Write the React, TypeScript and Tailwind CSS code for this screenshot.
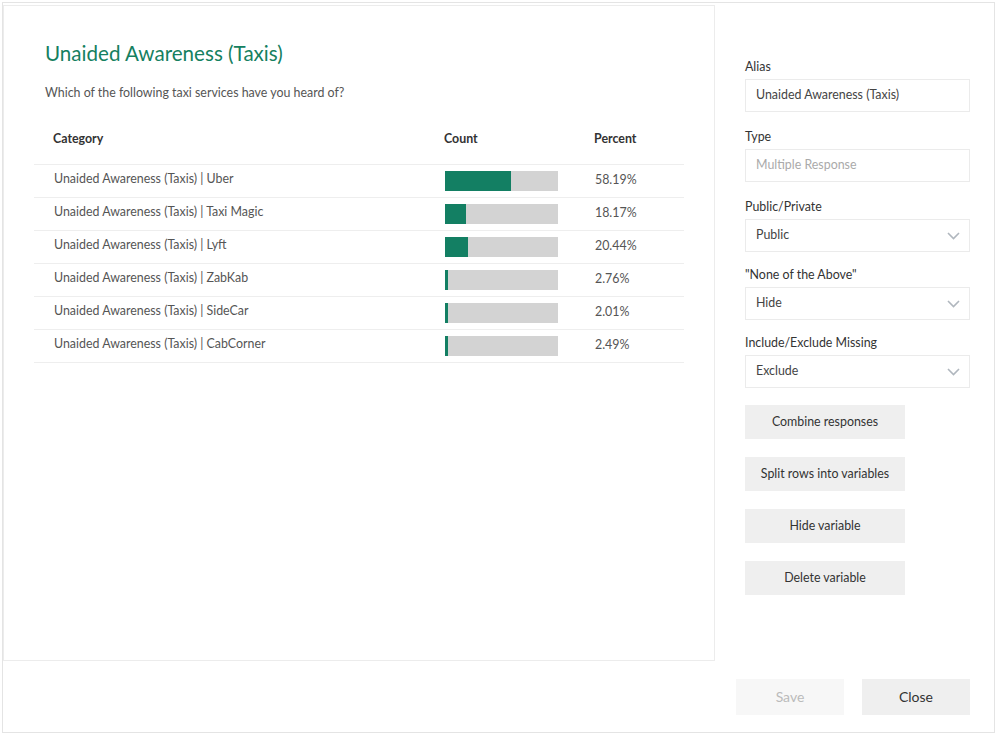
import * as React from "react";

type Row = { label: string; pct: number };

const ROWS: Row[] = [
  { label: "Unaided Awareness (Taxis) | Uber", pct: 58.19 },
  { label: "Unaided Awareness (Taxis) | Taxi Magic", pct: 18.17 },
  { label: "Unaided Awareness (Taxis) | Lyft", pct: 20.44 },
  { label: "Unaided Awareness (Taxis) | ZabKab", pct: 2.76 },
  { label: "Unaided Awareness (Taxis) | SideCar", pct: 2.01 },
  { label: "Unaided Awareness (Taxis) | CabCorner", pct: 2.49 },
];

const ACTIONS = ["Combine responses", "Split rows into variables", "Hide variable", "Delete variable"];

function Chevron() {
  return (
    <svg width="13" height="8" viewBox="0 0 13 8" fill="none">
      <polyline points="1,1 6.5,6.5 12,1" stroke="#b0b7be" strokeWidth="1.6" />
    </svg>
  );
}

function Field({ label, value, muted, select, gap }: { label: string; value: string; muted?: boolean; select?: boolean; gap: string }) {
  return (
    <div className={gap}>
      <div className="h-4 pt-[1px] text-[12.4px] leading-4 text-[#333]">{label}</div>
      <div className="mt-[5px] flex h-[33px] w-[225px] items-center justify-between border border-[#ebebeb] pl-[10px] pr-[9px]">
        <span className={"text-[12.4px] " + (muted ? "text-[#aaa]" : "text-[#444]")}>{value}</span>
        {select ? <Chevron /> : null}
      </div>
    </div>
  );
}

export default function App() {
  return (
    <div className="h-[734px] w-[995px] bg-white pl-[2px] pt-[2px] font-['Lato',sans-serif]">
      <div className="flex h-[731px] w-[993px] flex-col border border-[#e4e4e4]">
        <div className="flex">
          {/* left: table panel */}
          <div className="mt-[2px] h-[656px] w-[712px] border border-[#ececec]">
            <h1 className="ml-[41px] mt-[35px] text-[20.6px] leading-6 text-[#15805f]">Unaided Awareness (Taxis)</h1>
            <p className="ml-[41px] mt-[20px] text-[12.4px] leading-4 text-[#555]">Which of the following taxi services have you heard of?</p>

            <div className="ml-[30px] mt-[13px] w-[650px]">
              <div className="flex h-[50px] items-center pt-[1px] text-[12.4px] font-bold text-[#333]">
                <div className="w-[410px] pl-[19px]">Category</div>
                <div className="w-[150px]">Count</div>
                <div>Percent</div>
              </div>
              <div className="border-b border-[#eeeeee]">
                {ROWS.map((r) => (
                  <div key={r.label} className="flex h-[33px] items-center border-t border-[#eeeeee] text-[12.4px] text-[#555]">
                    <div className="w-[411px] pb-[3px] pl-[20px]">{r.label}</div>
                    <div className="w-[150px]">
                      <div className="h-[20px] w-[113px] bg-[#d3d3d3]">
                        <div className="h-full bg-[#137f63]" style={{ width: `${Math.max(r.pct, 2.6)}%` }} />
                      </div>
                    </div>
                    <div className="pb-[2px]">{r.pct.toFixed(2)}%</div>
                  </div>
                ))}
              </div>
            </div>
          </div>

          {/* right: settings */}
          <div className="pl-[30px] pt-[55px]">
            <Field gap="" label="Alias" value="Unaided Awareness (Taxis)" />
            <Field gap="mt-[16px]" label="Type" value="Multiple Response" muted />
            <Field gap="mt-[16px]" label="Public/Private" value="Public" select />
            <Field gap="mt-[14px]" label={'"None of the Above"'} value="Hide" select />
            <Field gap="mt-[14px]" label="Include/Exclude Missing" value="Exclude" select />
            <div className="mt-[17px] flex flex-col gap-[18px]">
              {ACTIONS.map((a) => (
                <button key={a} className="flex h-[34px] w-[160px] items-center justify-center bg-[#efefef] text-[12.4px] text-[#333]">
                  {a}
                </button>
              ))}
            </div>
          </div>
        </div>

        <div className="flex flex-1 items-start justify-end gap-[18px] pr-[24px] pt-[18px]">
          <button className="h-[36px] w-[108px] bg-[#f7f7f7] pb-[2px] text-[14px] text-[#bbb]">Save</button>
          <button className="h-[36px] w-[108px] bg-[#efefef] pb-[2px] text-[14px] text-[#333]">Close</button>
        </div>
      </div>
    </div>
  );
}
